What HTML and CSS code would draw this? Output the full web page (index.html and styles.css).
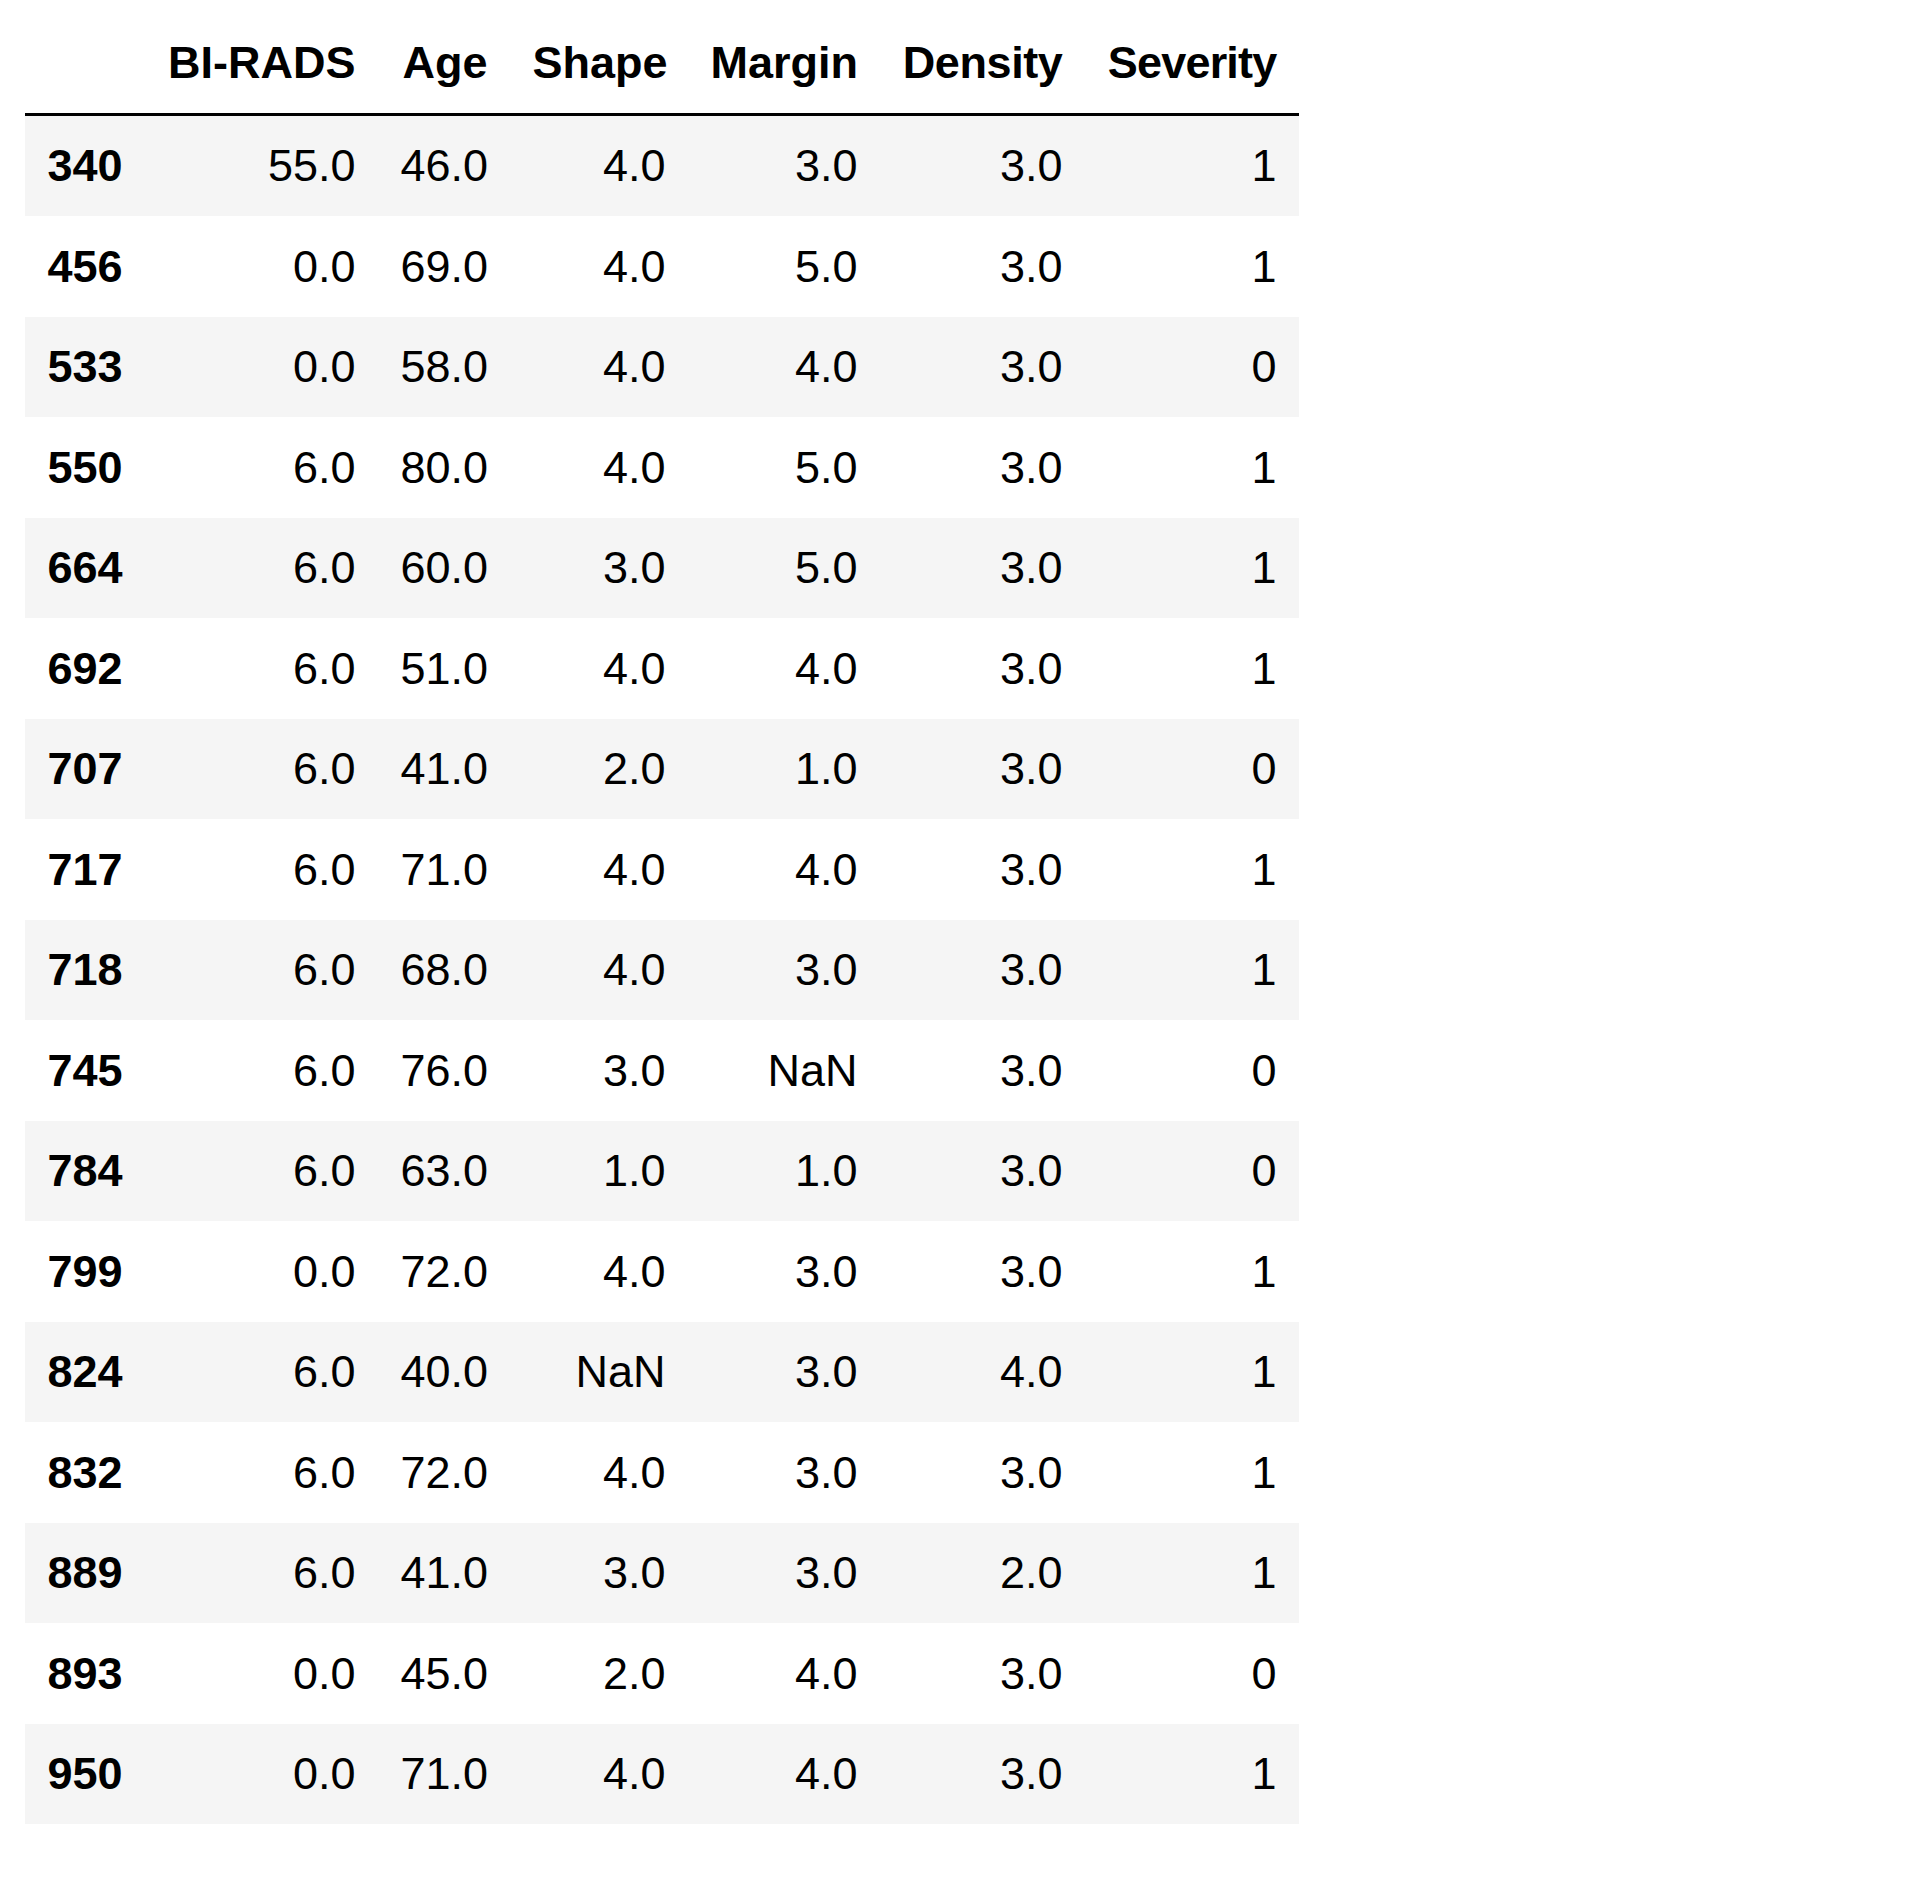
FILE: index.html
```html
<!DOCTYPE html>
<html>
<head>
<meta charset="utf-8">
<link rel="stylesheet" href="styles.css">
</head>
<body>
<table class="df">
  <colgroup>
    <col class="c-idx"><col class="c-birads"><col class="c-age"><col class="c-shape"><col class="c-margin"><col class="c-density"><col class="c-severity">
  </colgroup>
  <thead>
    <tr><th></th><th>BI-RADS</th><th>Age</th><th>Shape</th><th>Margin</th><th class="h-snug">Density</th><th class="h-tight">Severity</th></tr>
  </thead>
  <tbody>
    <tr><th>340</th><td>55.0</td><td>46.0</td><td>4.0</td><td>3.0</td><td>3.0</td><td>1</td></tr>
    <tr><th>456</th><td>0.0</td><td>69.0</td><td>4.0</td><td>5.0</td><td>3.0</td><td>1</td></tr>
    <tr><th>533</th><td>0.0</td><td>58.0</td><td>4.0</td><td>4.0</td><td>3.0</td><td>0</td></tr>
    <tr><th>550</th><td>6.0</td><td>80.0</td><td>4.0</td><td>5.0</td><td>3.0</td><td>1</td></tr>
    <tr><th>664</th><td>6.0</td><td>60.0</td><td>3.0</td><td>5.0</td><td>3.0</td><td>1</td></tr>
    <tr><th>692</th><td>6.0</td><td>51.0</td><td>4.0</td><td>4.0</td><td>3.0</td><td>1</td></tr>
    <tr><th>707</th><td>6.0</td><td>41.0</td><td>2.0</td><td>1.0</td><td>3.0</td><td>0</td></tr>
    <tr><th>717</th><td>6.0</td><td>71.0</td><td>4.0</td><td>4.0</td><td>3.0</td><td>1</td></tr>
    <tr><th>718</th><td>6.0</td><td>68.0</td><td>4.0</td><td>3.0</td><td>3.0</td><td>1</td></tr>
    <tr><th>745</th><td>6.0</td><td>76.0</td><td>3.0</td><td>NaN</td><td>3.0</td><td>0</td></tr>
    <tr><th>784</th><td>6.0</td><td>63.0</td><td>1.0</td><td>1.0</td><td>3.0</td><td>0</td></tr>
    <tr><th>799</th><td>0.0</td><td>72.0</td><td>4.0</td><td>3.0</td><td>3.0</td><td>1</td></tr>
    <tr><th>824</th><td>6.0</td><td>40.0</td><td>NaN</td><td>3.0</td><td>4.0</td><td>1</td></tr>
    <tr><th>832</th><td>6.0</td><td>72.0</td><td>4.0</td><td>3.0</td><td>3.0</td><td>1</td></tr>
    <tr><th>889</th><td>6.0</td><td>41.0</td><td>3.0</td><td>3.0</td><td>2.0</td><td>1</td></tr>
    <tr><th>893</th><td>0.0</td><td>45.0</td><td>2.0</td><td>4.0</td><td>3.0</td><td>0</td></tr>
    <tr><th>950</th><td>0.0</td><td>71.0</td><td>4.0</td><td>4.0</td><td>3.0</td><td>1</td></tr>
  </tbody>
</table>
</body>
</html>
```
FILE: styles.css
```css
html, body {
  margin: 0;
  padding: 0;
  background: #ffffff;
}

body {
  font-family: "Liberation Sans", Arial, Helvetica, sans-serif;
  color: #000000;
}

.df {
  margin: 12px 0 0 25px;
  border-collapse: collapse;
  border-spacing: 0;
  table-layout: fixed;
  width: 1274px;
  font-size: 45px;
}

.c-idx { width: 120px; }
.c-birads { width: 233px; }
.c-age { width: 132px; }
.c-shape { width: 178px; }
.c-margin { width: 192px; }
.c-density { width: 205px; }
.c-severity { width: 214px; }

.df th,
.df td {
  padding: 22.5px;
  line-height: 55.5px;
  text-align: right;
  vertical-align: middle;
  white-space: nowrap;
  border: none;
}

.df thead th {
  font-weight: bold;
  vertical-align: bottom;
  border-bottom: 3px solid #000000;
}

.df thead th.h-snug {
  letter-spacing: -0.4px;
}

.df thead th.h-tight {
  letter-spacing: -0.8px;
}

.df tbody th {
  font-weight: bold;
  text-align: left;
}

.df tbody td {
  font-weight: normal;
}

.df tbody tr:nth-child(odd) {
  background: #f5f5f5;
}
```
